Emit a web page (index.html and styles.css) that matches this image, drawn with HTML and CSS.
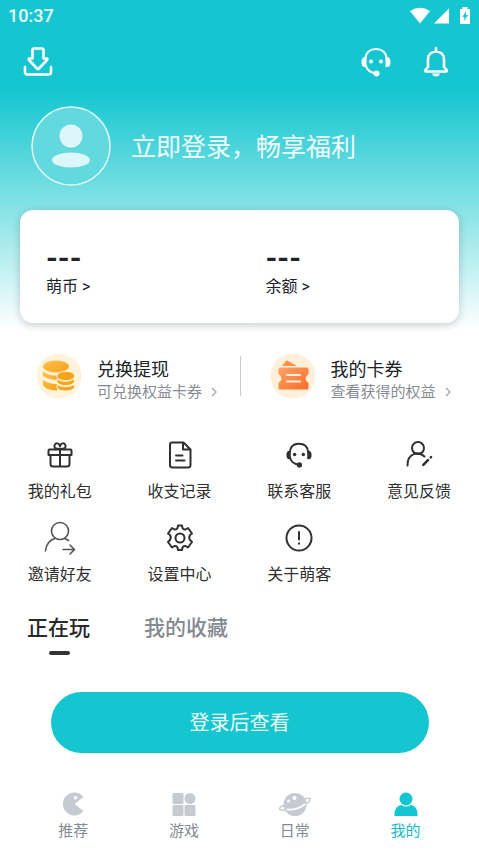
FILE: index.html
```html
<!DOCTYPE html>
<html lang="zh-CN">
<head>
<meta charset="utf-8">
<meta name="viewport" content="width=device-width, initial-scale=1">
<title>我的</title>
<link rel="stylesheet" href="styles.css">
</head>
<body>
<svg class="sprite" aria-hidden="true">
  <symbol id="headset" viewBox="0 0 30 30">
    <path d="M4.500 11.500C5 5.500 9 2 15 2S25 5.500 25.500 11.500M4.500 18C6 23 9.500 26 15 26" fill="none" stroke="currentColor" stroke-width="2.200"/>
    <path d="M5.500 10v10H4C1.500 20 .5 18 .5 15S1.500 10 4 10zM24.500 10v10H26c2.500 0 3.500-2 3.500-5s-1-5-3.500-5z" fill="currentColor"/>
    <circle cx="10" cy="14.500" r="2" fill="currentColor"/><circle cx="20" cy="14.500" r="2" fill="currentColor"/><circle cx="15.500" cy="26.500" r="3" fill="currentColor"/>
  </symbol>
</svg>
<header class="hero">
  <div class="status">
    <span>10:37</span>
    <svg class="status-icons" width="60" height="18" viewBox="0 0 60 18" fill="#fff" aria-hidden="true">
      <path d="M0 4Q10-2.500 20 4L10 16.500zM24 16.500L39 1.500v15z"/>
      <path fill-rule="evenodd" d="M50 2h2.500V0h5v2H60v15H50zM56 4l-3.500 6h2L54 14l4-6h-2.200z"/>
    </svg>
  </div>
  <div class="toolbar">
    <button class="tool" aria-label="下载"><svg width="30" height="30" viewBox="0 0 30 30" fill="none" stroke="currentColor" stroke-width="2.600" stroke-linejoin="round" stroke-linecap="round"><path d="M9.500 3Q9.500 1.500 11 1.500h8Q20.500 1.500 20.500 3v8.500h3q1.500 0 .5 1.500l-8 8.500q-1 1-2 0L6 13q-1-1.500.5-1.500h3zM2 20v5q0 2.500 2.500 2.500h21Q28 27.500 28 25v-5"/></svg></button>
    <span class="spacer"></span>
    <button class="tool" aria-label="客服"><svg width="30" height="30"><use href="#headset"/></svg></button>
    <button class="tool" aria-label="通知"><svg width="30" height="30" viewBox="0 0 30 30" fill="none" stroke="currentColor" stroke-width="2.600" stroke-linejoin="round" stroke-linecap="round"><path d="M15 1v3M7 20V12.500C7 7.500 10 4.500 15 4.500s8 3 8 8V20l2.700 3q.7 1.500-1 1.500H5.300q-1.700 0-1-1.500z"/><path d="M11 26.500h8q-1 3-4 3t-4-3z" fill="currentColor" stroke="none"/></svg></button>
  </div>
  <a class="profile" href="#login">
    <svg width="80" height="80" viewBox="0 0 80 80" aria-hidden="true"><circle cx="40" cy="40" r="39" fill="#62d9de" stroke="#e4f9fa" stroke-width="1.500"/><circle cx="40" cy="30" r="11.500" fill="#dcf6f9"/><ellipse cx="40" cy="54" rx="19" ry="7.500" fill="#dcf6f9"/></svg>
    <span>立即登录，畅享福利</span>
  </a>
  <section class="wallet">
    <a href="#coins"><strong>---</strong><span>萌币 &gt;</span></a>
    <a href="#balance"><strong>---</strong><span>余额 &gt;</span></a>
  </section>
</header>
<main>
  <section class="benefits">
    <a href="#redeem">
      <svg width="46" height="46" viewBox="0 0 46 46" aria-hidden="true">
        <defs><linearGradient id="gold" x1="0" y1="0" x2="1" y2="1"><stop offset="0" stop-color="#ffc14d"/><stop offset="1" stop-color="#f8a11c"/></linearGradient></defs>
        <circle cx="23" cy="23" r="22.500" fill="#fff4d9"/>
        <g fill="url(#gold)"><ellipse cx="20" cy="13.500" rx="13" ry="6"/><path d="M7 18q5 5 14 4.500l2 4.500Q12 27 7 23zM7 27q5 4 14 4v6.500q-10 0-14-5z"/></g>
        <g fill="#f8a51e" stroke="#fff4d9" stroke-width="1"><path d="M21 31.500q8 4.500 17.500 0v3q-2 3.500-9 3.500T21 34.500zM21 26q8 4.500 17.500 0v3q-2 3.500-9 3.500T21 29z"/><ellipse cx="29.800" cy="23" rx="9" ry="4.800"/></g>
      </svg>
      <span class="benefit-text"><b>兑换提现</b><small>可兑换权益卡券 <svg width="8" height="12" viewBox="0 0 8 12" aria-hidden="true"><path d="M2 2l4 4-4 4" fill="none" stroke="#a2a5ab" stroke-width="1.300"/></svg></small></span>
    </a>
    <a href="#coupons">
      <svg width="46" height="46" viewBox="0 0 46 46" aria-hidden="true">
        <defs><linearGradient id="coral" x1="0" y1="0" x2="1" y2="1"><stop offset="0" stop-color="#ffa366"/><stop offset="1" stop-color="#fa6c29"/></linearGradient></defs>
        <circle cx="23" cy="23" r="22.500" fill="#ffefdb"/><path d="M12 13l4-5q1-1 2 0l9 5z" fill="#ff9146"/>
        <path d="M10 14.500h27q1.500 0 1.500 1.500v5q-3 2-3 4.500t3 4.500v5q0 1.500-1.500 1.500H10q-1.500 0-1.500-1.500v-5q3-2 3-4.500t-3-4.500v-5q0-1.500 1.500-1.500z" fill="url(#coral)"/><path d="M17 22h13M17 28.500h13" stroke="#fff0df" stroke-width="2" stroke-linecap="round"/>
      </svg>
      <span class="benefit-text"><b>我的卡券</b><small>查看获得的权益 <svg width="8" height="12" viewBox="0 0 8 12" aria-hidden="true"><path d="M2 2l4 4-4 4" fill="none" stroke="#a2a5ab" stroke-width="1.300"/></svg></small></span>
    </a>
  </section>
  <nav class="services" aria-label="服务">
    <a href="#gifts"><svg width="36" height="36" viewBox="0 0 36 36"><path d="M7.500 12.500h21q1 0 1 1v4.500h-23v-4.500q0-1 1-1zM8.500 18v9q0 2.500 2.500 2.500h14q2.500 0 2.500-2.500v-9M18 12v17.500M17.500 12q-6 0-5-3.500c1-3.500 5-2.500 5.500 1 .5-3.500 4.500-4.500 5.500-1q1 3.500-5 3.500"/></svg>我的礼包</a>
    <a href="#records"><svg width="36" height="36" viewBox="0 0 36 36"><path d="M10 5.500h11.500l7 7V28q0 2.500-2.500 2.500H10.500Q8 30.500 8 28V7.500Q8 5.500 10 5.500zM21 6v6.500h7M14 18.500h6.500M14 23.500h8.500"/></svg>收支记录</a>
    <a href="#support"><svg class="small-headset" width="26" height="36"><use href="#headset"/></svg>联系客服</a>
    <a href="#feedback"><svg width="36" height="36" viewBox="0 0 36 36"><circle cx="17" cy="11" r="6"/><path d="M6.500 28.500c0-13 11-14.500 17-9"/><path d="M22.300 27.800l4.700-4.700M29.800 20.300l.2-.2" class="pen"/></svg>意见反馈</a>
    <a href="#invite"><svg class="thin" width="36" height="36" viewBox="0 0 36 36"><circle cx="18" cy="11" r="8.500"/><path d="M3.500 31C4 24 8 20 13 18.500M22.500 18.500q2 .5 4 2M21 29.500h11M28 25l4.500 4.500L28 34"/></svg>邀请好友</a>
    <a href="#settings"><svg width="36" height="36" viewBox="0 0 36 36"><circle cx="18" cy="18" r="4.500"/><path d="M15.500 8L16 5.500h4l.5 2.500q1 2 3 1.500l2.500-1.500 4 5.500-2 1.500q-1.500 3 0 5l2 2-4 5.500-2.500-1.500q-2-.5-3 1.500l-.5 2.500h-4l-.5-2.500q-1-2-3-1.500L10 27.500 6 22l2-2q1.500-3 0-5l-2-1.500L10 8l2.500 1.500q2 .5 3-1.500z"/></svg>设置中心</a>
    <a href="#about"><svg width="36" height="36" viewBox="0 0 36 36"><circle cx="18" cy="18" r="12.500"/><path d="M18 12v7.500M18 23.200v.5"/></svg>关于萌客</a>
  </nav>
  <div class="tabs" role="tablist"><button class="tab selected" role="tab" aria-selected="true">正在玩</button><button class="tab" role="tab" aria-selected="false">我的收藏</button></div>
  <button class="login">登录后查看</button>
</main>
<nav class="bottom-nav" aria-label="主导航">
  <a href="#recommend"><svg width="32" height="26" viewBox="0 0 32 26"><path fill-rule="evenodd" d="M26.500 6A11.500 11.500 0 1 0 26.500 20L17.500 13zM18.500 5a1.800 1.800 0 1 1 0 3.600 1.800 1.800 0 0 1 0-3.600z"/></svg>推荐</a>
  <a href="#games"><svg width="32" height="26" viewBox="0 0 32 26"><rect x="4.500" y="2" width="11" height="11" rx="1.500"/><circle cx="22" cy="7.500" r="5.500"/><rect x="4.500" y="14" width="11" height="11" rx="1.500"/><rect x="16.500" y="14" width="11" height="11" rx="1.500"/></svg>游戏</a>
  <a href="#daily"><svg width="32" height="26" viewBox="0 0 32 26"><path d="M5 14.500c-3.500.8-5 2.500-4 4 1 1 4 .8 7 0M26 8c3-1.200 5-1 5.200.5.200 1.500-1.700 3-4.200 4" fill="none" stroke="currentColor" stroke-width="1.500"/><circle cx="16" cy="13.500" r="11.500"/><path d="M8.500 18.500q9 1 17-5" fill="none" stroke="#fff" stroke-width="1.800" stroke-linecap="round"/><circle cx="15.500" cy="7" r="2" fill="#fff"/><circle cx="9.500" cy="10" r="1.500" fill="#fff"/></svg>日常</a>
  <a class="current" href="#mine" aria-current="page"><svg width="32" height="26" viewBox="0 0 32 26"><circle cx="16" cy="8" r="6.500"/><path d="M4.500 25v-3q1-7.500 7-8 4.500 3 9 0 6 .5 7 8v3z"/></svg>我的</a>
</nav>
</body>
</html>
```
FILE: styles.css
```css
* { box-sizing: border-box; }
body {
  margin: 0;
  background: #fff;
  color: #202329;
  font-family: Roboto, "Noto Sans CJK SC", sans-serif;
  font-size: 16px;
  line-height: 24px;
}
a { color: inherit; text-decoration: none; }
button { border: 0; padding: 0; background: none; color: inherit; font: inherit; }
svg { display: block; flex: none; }
.sprite { position: absolute; width: 0; height: 0; }

.hero {
  padding-bottom: 8px;
  background: linear-gradient(#15c6d0 0, #15c6d0 90px, #7ee1e4 200px, #fff 330px);
}
.status {
  display: flex;
  align-items: center;
  justify-content: space-between;
  height: 32px;
  padding: 0 9px 0 8px;
  color: #e9fbfc;
  font-size: 18px;
  font-weight: 500;
}
.toolbar { display: flex; gap: 30px; height: 60px; padding: 0 28px 0 23px; align-items: center; color: #fff; }
.spacer { flex: 1; }
.profile {
  display: flex;
  align-items: center;
  gap: 20px;
  padding: 14px 31px 0;
  color: #f0fcfd;
  font-size: 25px;
  line-height: 36px;
}
.profile span { padding-top: 4px; }
.wallet {
  display: grid;
  grid-template-columns: 1fr 1fr;
  margin: 24px 20px 0;
  padding: 32px 0 24px;
  border-radius: 13px;
  background: #fff;
  box-shadow: 0 2px 8px #0003;
}
.wallet a { display: flex; flex-direction: column; padding-left: 26px; }
.wallet strong { font-size: 30px; line-height: 32px; }
.wallet span { line-height: 25px; }

.benefits { display: grid; grid-template-columns: 1fr 1fr; margin-top: 14px; }
.benefits a { display: flex; align-items: center; gap: 15px; padding: 4px 0 4px 36px; }
.benefits a + a { padding-left: 30px; background: linear-gradient(#c9cbce, #c9cbce) 0 50% / 1px 40px no-repeat; }
.benefit-text { display: grid; padding-top: 10px; white-space: nowrap; }
.benefits b { font-size: 18px; font-weight: 400; line-height: 22px; }
.benefits small { display: flex; align-items: center; gap: 8px; color: #878b93; font-size: 15px; line-height: 22px; }

.services { display: grid; grid-template-columns: repeat(4, 1fr); row-gap: 16px; margin-top: 30px; color: #303030; }
.services a { display: flex; flex-direction: column; align-items: center; gap: 7px; line-height: 24px; }
.services svg { fill: none; stroke: currentColor; stroke-width: 2; stroke-linecap: round; stroke-linejoin: round; }
.services .small-headset { stroke: none; }
.services .thin { stroke-width: 1.6; color: #555; }
.services .pen { stroke-width: 2.6; }

.tabs { display: flex; gap: 54px; margin-top: 25px; padding: 0 27px; }
.tab { position: relative; padding-bottom: 12px; color: #858991; font-size: 21px; font-weight: 500; line-height: 32px; }
.tab.selected { color: #28292b; }
.tab.selected::after {
  content: "";
  position: absolute;
  bottom: 1px;
  left: calc(50% - 10px);
  width: 21px;
  height: 4px;
  border-radius: 2px;
  background: #333;
}
.login {
  display: block;
  width: calc(100% - 101px);
  margin: 36px auto 0;
  padding: 16px 15px 14px;
  border-radius: 31px;
  background: #15c6d0;
  color: #eefcfd;
  font-size: 20px;
  line-height: 31px;
}
.bottom-nav {
  display: grid;
  grid-template-columns: repeat(4, 1fr);
  margin-top: 38px;
  padding: 0 18px 8px;
  color: #858991;
  font-size: 15px;
}
.bottom-nav a { display: flex; flex-direction: column; align-items: center; gap: 2px; }
.bottom-nav svg { fill: #c6cbd2; color: #c6cbd2; }
.bottom-nav .current { color: #15bac4; }
.bottom-nav .current svg { fill: #15c6d0; }
```
